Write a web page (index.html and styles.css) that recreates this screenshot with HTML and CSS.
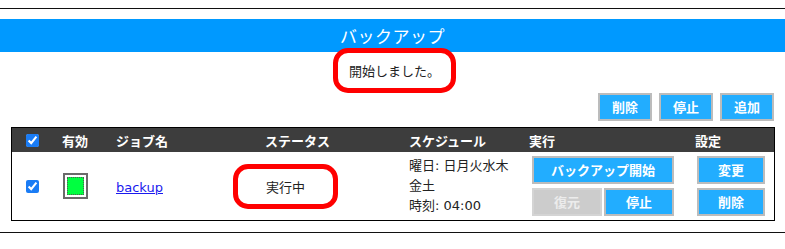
FILE: index.html
```html
<!DOCTYPE html>
<html lang="ja">
<head>
<meta charset="utf-8">
<title>バックアップ</title>
<link rel="stylesheet" href="styles.css">
</head>
<body>
<div class="rule"></div>
<h1 class="title">バックアップ</h1>
<div class="msg-row"><span class="msg">開始しました。</span></div>
<div class="toolbar">
  <button class="btn small">削除</button>
  <button class="btn small">停止</button>
  <button class="btn small">追加</button>
</div>
<div class="jobs">
  <div class="head">
    <div class="c c1"><input type="checkbox" checked></div>
    <div class="c c2">有効</div>
    <div class="c c3">ジョブ名</div>
    <div class="c c4">ステータス</div>
    <div class="c c5">スケジュール</div>
    <div class="c c6">実行</div>
    <div class="c c7">設定</div>
  </div>
  <div class="row">
    <div class="c c1"><input type="checkbox" checked></div>
    <div class="c c2"><span class="swatch"><span class="swatch-in"></span></span></div>
    <div class="c c3"><a href="#" class="job-link">backup</a></div>
    <div class="c c4"><span class="status">実行中</span></div>
    <div class="c c5"><div class="sched">曜日: 日月火水木金土<br>時刻: 04:00</div></div>
    <div class="c c6">
      <div class="exec">
        <button class="btn wide">バックアップ開始</button>
        <button class="btn half disabled">復元</button>
        <button class="btn half">停止</button>
      </div>
    </div>
    <div class="c c7">
      <div class="settings">
        <button class="btn set">変更</button>
        <button class="btn set">削除</button>
      </div>
    </div>
  </div>
</div>
<div class="rule bottom"></div>
</body>
</html>
```
FILE: styles.css
```css
html, body {
  margin: 0;
  padding: 0;
  background: #fff;
}
body {
  padding-top: 8px;
  font-family: "Noto Sans CJK JP", "Noto Sans", sans-serif;
  font-size: 13px;
  color: #222;
}
.rule {
  height: 1px;
  background: #111;
}
.rule.bottom {
  margin-top: 11px;
}
.title {
  margin: 10px 0 0;
  height: 33px;
  line-height: 33px;
  background: #0099ff;
  color: #fff;
  font-size: 17px;
  font-weight: normal;
  text-align: center;
  letter-spacing: 0.5px;
}
.msg-row {
  display: flex;
  justify-content: center;
  margin-top: -4px;
  padding-left: 4px;
}
.msg {
  display: block;
  box-sizing: border-box;
  width: 123px;
  height: 45px;
  border: 5px solid #ff0000;
  border-radius: 15px;
  line-height: 35px;
  text-align: center;
  background: #fff;
  color: #222;
}
.toolbar {
  display: flex;
  justify-content: flex-end;
  gap: 7px;
  padding-right: 11px;
}
.btn {
  box-sizing: border-box;
  margin: 0;
  padding: 0;
  height: 28px;
  background: #22adff;
  border: 2px solid #bcbcbc;
  color: #fff;
  font-family: "Noto Sans CJK JP", sans-serif;
  font-size: 13px;
  font-weight: bold;
  line-height: 24px;
  text-align: center;
}
.btn.small { width: 54px; }
.btn.disabled {
  background: #cccccc;
  border-color: #d4d4d4;
  color: #ececec;
}
.jobs {
  margin: 6px 10px 0 11px;
  border: 1px solid #000;
}
.head, .row {
  display: grid;
  grid-template-columns: 40px 46px 120px 179px 123px 165px 89px;
  align-items: center;
}
.head {
  height: 24px;
  background: #3d3d3d;
  color: #fff;
  font-weight: bold;
}
.row {
  height: 68px;
}
.c { box-sizing: border-box; }
.c1 { display: flex; justify-content: center; }
.c1 input {
  margin: 0;
  width: 13px;
  height: 13px;
  accent-color: #1a7cf5;
}
.c2 { text-align: center; display: flex; justify-content: center; }
.c3 { padding-left: 18px; }
.head .c4 { padding-left: 47px; }
.row .c4 { padding-left: 15px; display: flex; }
.c5 { padding-left: 12px; }
.head .c6 { padding-left: 9px; }
.row .c6 { padding-left: 12px; }
.head .c7 { padding-left: 10px; }
.row .c7 { padding-left: 12px; }
.swatch {
  display: block;
  box-sizing: border-box;
  width: 25px;
  height: 26px;
  border: 2px solid #6a6a6a;
  padding: 2px;
  background: #fff;
}
.swatch-in {
  display: block;
  box-sizing: border-box;
  width: 100%;
  height: 100%;
  background: #00ff40;
  border: 1px dotted #555;
}
.job-link {
  color: #1a1aee;
  font-family: "DejaVu Sans", "Noto Sans CJK JP", sans-serif;
  font-size: 13px;
  text-decoration: underline;
}
.status {
  display: block;
  box-sizing: border-box;
  width: 105px;
  height: 45px;
  border: 5px solid #ff0000;
  border-radius: 15px;
  line-height: 35px;
  text-align: center;
}
.sched {
  width: 106px;
  line-height: 20px;
  font-family: "DejaVu Sans", "Noto Sans CJK JP", sans-serif;
}
.exec {
  display: grid;
  grid-template-columns: 70px 70px;
  column-gap: 2px;
  row-gap: 4px;
  width: 142px;
}
.btn.wide { grid-column: 1 / 3; }
.settings {
  display: flex;
  flex-direction: column;
  gap: 4px;
  width: 68px;
}
.btn.set { width: 68px; }
```
